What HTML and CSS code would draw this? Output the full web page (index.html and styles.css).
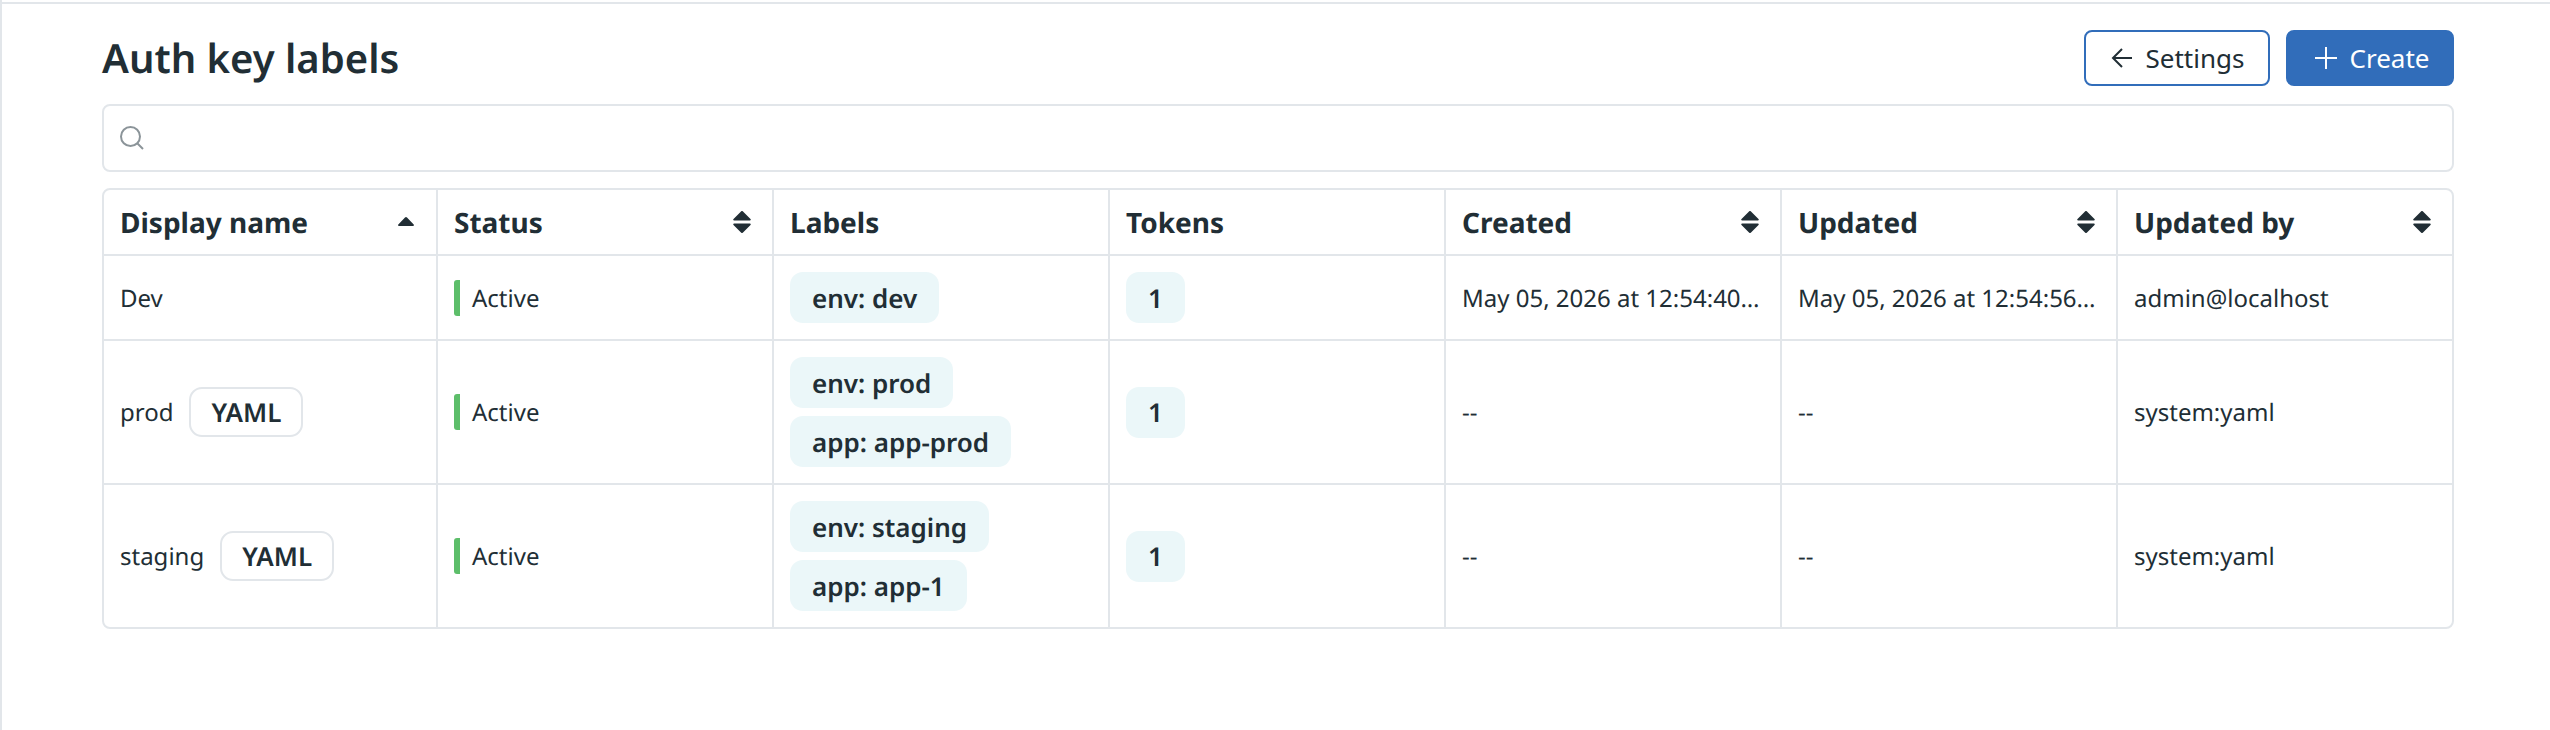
FILE: index.html
```html
<!DOCTYPE html>
<html lang="en">
<head>
<meta charset="utf-8">
<title>Auth key labels</title>
<link rel="stylesheet" href="styles.css">
</head>
<body>
<div class="frame">
<main class="page">
  <header class="page-head">
    <h1 class="title">Auth key labels</h1>
    <div class="actions">
      <button class="btn btn-outline">
        <svg class="btn-icon" viewBox="0 0 24 24"><path d="M22 12H3M12 3l-9 9 9 9"/></svg>
        Settings
      </button>
      <button class="btn btn-primary">
        <svg class="btn-icon" viewBox="0 0 24 24"><path d="M12 1v22M1 12h22"/></svg>
        Create
      </button>
    </div>
  </header>
  <div class="search">
    <svg class="search-icon" viewBox="0 0 24 24"><circle cx="10.500" cy="10.500" r="9.500"/><path d="m17.500 17.500 5.500 5.500"/></svg>
  </div>
  <div class="table-wrap">
    <table class="grid">
      <thead>
        <tr>
          <th><div class="th-in">Display name<svg class="sort" viewBox="0 0 18 22"><path d="M8 6.500a1.300 1.300 0 0 1 2 0l6.700 7c.6.700.2 1.500-.7 1.500H2c-.9 0-1.300-.8-.7-1.500z"/></svg></div></th>
          <th><div class="th-in">Status<svg class="sort" viewBox="0 0 18 22"><use href="#both"/></svg></div></th>
          <th><div class="th-in">Labels</div></th>
          <th><div class="th-in">Tokens</div></th>
          <th><div class="th-in">Created<svg class="sort" viewBox="0 0 18 22"><use href="#both"/></svg></div></th>
          <th><div class="th-in">Updated<svg class="sort" viewBox="0 0 18 22"><use href="#both"/></svg></div></th>
          <th><div class="th-in">Updated by<svg class="sort" viewBox="0 0 18 22"><use href="#both"/></svg></div></th>
        </tr>
      </thead>
      <tbody>
        <tr class="row-1">
          <td><div class="name">Dev</div></td>
          <td><div class="status"><i class="bar"></i>Active</div></td>
          <td><div class="tags"><span class="tag">env: dev</span></div></td>
          <td><span class="tag tag-count">1</span></td>
          <td><div class="cell">May 05, 2026 at 12:54:40…</div></td>
          <td><div class="cell">May 05, 2026 at 12:54:56…</div></td>
          <td><div class="cell">admin@localhost</div></td>
        </tr>
        <tr class="row-2">
          <td><div class="name">prod<span class="yaml">YAML</span></div></td>
          <td><div class="status"><i class="bar"></i>Active</div></td>
          <td><div class="tags"><span class="tag">env: prod</span><span class="tag">app: app-prod</span></div></td>
          <td><span class="tag tag-count">1</span></td>
          <td><div class="cell">--</div></td>
          <td><div class="cell">--</div></td>
          <td><div class="cell">system:yaml</div></td>
        </tr>
        <tr class="row-2">
          <td><div class="name">staging<span class="yaml">YAML</span></div></td>
          <td><div class="status"><i class="bar"></i>Active</div></td>
          <td><div class="tags"><span class="tag">env: staging</span><span class="tag">app: app-1</span></div></td>
          <td><span class="tag tag-count">1</span></td>
          <td><div class="cell">--</div></td>
          <td><div class="cell">--</div></td>
          <td><div class="cell">system:yaml</div></td>
        </tr>
      </tbody>
    </table>
  </div>
</main>
</div>
<svg class="defs" width="0" height="0">
  <defs>
    <g id="both">
      <path d="M8 .5a1.300 1.300 0 0 1 2 0l7.500 7.500c.6.700.2 1.500-.7 1.500H1.200c-.9 0-1.300-.8-.7-1.500z"/>
      <path d="M10 21.500a1.300 1.300 0 0 1-2 0L.5 14c-.6-.7-.2-1.500.7-1.500h15.600c.9 0 1.300.8.7 1.500z"/>
    </g>
  </defs>
</svg>
</body>
</html>
```
FILE: styles.css
```css
* { box-sizing: border-box; }
html, body { margin: 0; padding: 0; height: 100%; background: #fff; }
body {
  font-family: "Noto Sans", sans-serif;
  font-size: 24px;
  color: #212e35;
  overflow: hidden;
  text-rendering: geometricPrecision;
}
.defs { position: absolute; }
.frame {
  height: 100%;
  border-left: 2px solid #e2e6ea;
  padding-top: 2px;
}
.page {
  height: 100%;
  border-top: 2px solid #e2e6ea;
  padding: 26px 96px 0 100px;
}
.page-head {
  display: flex;
  align-items: center;
  justify-content: space-between;
  height: 56px;
  margin-bottom: 18px;
}
.title {
  margin: 0;
  font-size: 40px;
  line-height: 56px;
  font-weight: 600;
}
.actions { display: flex; gap: 16px; }
.btn {
  display: flex;
  align-items: center;
  justify-content: center;
  gap: 12px;
  height: 56px;
  padding: 0;
  border-radius: 8px;
  font: inherit;
  font-size: 26px;
}
.btn-outline {
  width: 186px;
  background: #fff;
  border: 2px solid #316dba;
  color: #212e35;
}
.btn-primary {
  width: 168px;
  padding-left: 3px;
  background: #316dba;
  border: 2px solid #316dba;
  color: #fff;
}
.btn-icon {
  width: 24px;
  height: 24px;
  fill: none;
  stroke: currentColor;
  stroke-width: 2;
}
.search {
  display: flex;
  align-items: center;
  height: 68px;
  padding-left: 16px;
  border: 2px solid #e2e6ea;
  border-radius: 8px;
  margin-bottom: 16px;
}
.search-icon {
  width: 24px;
  height: 24px;
  fill: none;
  stroke: #8b9499;
  stroke-width: 2;
}
.table-wrap {
  width: 2352px;
  border: 2px solid #e2e6ea;
  border-radius: 8px;
  overflow: hidden;
}
.grid {
  width: 2348px;
  table-layout: fixed;
  border-collapse: separate;
  border-spacing: 0;
}
.grid th, .grid td {
  padding: 0 16px;
  border-left: 2px solid #e2e6ea;
  border-top: 2px solid #e2e6ea;
  text-align: left;
  vertical-align: middle;
}
.grid th:first-child, .grid td:first-child { border-left: 0; }
.grid th {
  width: 336px;
  border-top: 0;
  height: 64px;
  padding-top: 2px;
  font-size: 28px;
  font-weight: 700;
}
.grid th:first-child { width: 332px; }
.row-1 td { height: 85px; }
.row-2 td { height: 144px; }
.row-1 .name, .row-1 .status, .row-1 .cell { padding-top: 1px; }
.th-in { display: flex; align-items: center; justify-content: space-between; }
.sort { width: 18px; height: 22px; flex: none; margin-right: 5px; margin-top: -2px; fill: #212e35; }
.name { display: flex; align-items: center; gap: 16px; }
.yaml {
  display: inline-flex;
  align-items: center;
  padding: 0 20px;
  height: 50px;
  border: 2px solid #e2e6ea;
  border-radius: 13px;
  font-size: 26px;
  font-weight: 600;
}
.status { display: flex; align-items: center; gap: 12px; }
.bar {
  width: 6px;
  height: 36px;
  background: #5dbe6a;
  border-radius: 3px 0 0 3px;
}
.tags { display: flex; flex-direction: column; align-items: flex-start; gap: 8px; }
.tag {
  display: inline-flex;
  align-items: center;
  height: 51px;
  padding: 0 22px;
  background: #ebf7f9;
  border-radius: 13px;
  font-size: 26px;
  font-weight: 600;
}
.cell { white-space: nowrap; }
```
